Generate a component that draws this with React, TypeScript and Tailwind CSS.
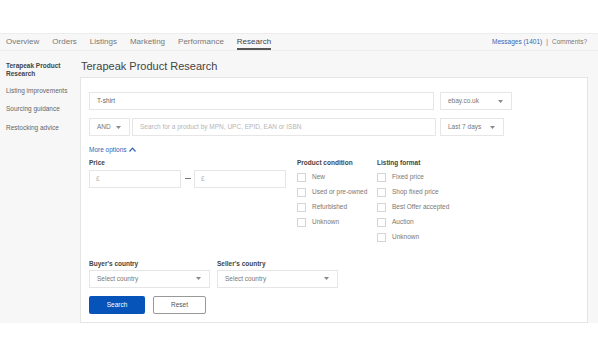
import React from 'react';

const Caret = () => (
  <svg width="5" height="3" viewBox="0 0 5 3" className="fill-[#888]">
    <path d="M0 0h5L2.5 3z" />
  </svg>
);

const Check = ({ label }: { label: string }) => (
  <div className="flex items-center h-[15px]">
    <span className="w-[9px] h-[9px] border border-[#d5d5d5] bg-white mr-[6px]" />
    <span className="text-[6.5px] text-[#777]">{label}</span>
  </div>
);

const Select = ({ text, className }: { text: string; className: string }) => (
  <div className={`h-[18px] border border-[#e6e6e6] bg-white flex items-center justify-between pl-[7px] pr-[8px] ${className}`}>
    <span className="text-[6.5px] text-[#777]">{text}</span>
    <Caret />
  </div>
);

export default function App() {
  const tabs = ['Overview', 'Orders', 'Listings', 'Marketing', 'Performance', 'Research'];
  return (
    <div className="w-[598px] h-[358px] bg-white font-['Liberation_Sans',Arial,sans-serif] flex flex-col">
      <div className="h-[33px]" />
      <div className="h-[18px] bg-[#f7f7f7] border-y border-[#ececec] flex items-center justify-between pl-[6px] pr-[6px]">
        <div className="flex gap-[13px] text-[8px] text-[#777] h-full">
          {tabs.map((t) => (
            <span
              key={t}
              className={`flex items-center h-full ${t === 'Research' ? 'text-[#444] border-b-2 border-[#555] pt-[2px]' : ''}`}
            >
              {t}
            </span>
          ))}
        </div>
        <div className="text-[6.5px] text-[#777] pr-[5px]">
          <span className="text-[#3665b3]">Messages (1401)</span>
          <span className="mx-[4px]">|</span>
          <span>Comments?</span>
        </div>
      </div>
      <div className="h-[272px] bg-[#f7f7f7] flex">
        <div className="w-[80px] pl-[6px] pt-[11px] flex flex-col text-[6.5px] text-[#666]">
          <div className="font-bold text-[#444] leading-[8px]">Terapeak Product Research</div>
          <div className="mt-[8px]">Listing improvements</div>
          <div className="mt-[8px]">Sourcing guidance</div>
          <div className="mt-[9px]">Restocking advice</div>
        </div>
        <div className="flex flex-col">
          <div className="text-[11px] text-[#444] pt-[7px] pl-[1px] h-[26px]">Terapeak Product Research</div>
          <div className="w-[508px] flex-1 bg-white border border-[#e5e5e5] pl-[8px] pt-[14px] flex flex-col">
            <div className="flex gap-[6px]">
              <div className="w-[345px] h-[18px] border border-[#e6e6e6] flex items-center pl-[7px] text-[6.5px] text-[#666]">T-shirt</div>
              <Select text="ebay.co.uk" className="w-[72px]" />
            </div>
            <div className="flex mt-[8px]">
              <Select text="AND" className="w-[41px]" />
              <div className="ml-[2px] w-[304px] h-[18px] border border-[#e6e6e6] flex items-center pl-[7px] text-[6.5px] text-[#b5b5b5]">
                Search for a product by MPN, UPC, EPID, EAN or ISBN
              </div>
              <Select text="Last 7 days" className="w-[64px] ml-[4px]" />
            </div>
            <div className="mt-[9px] text-[6.5px] text-[#3665b3] flex items-center gap-[2px]">
              More options
              <svg width="7" height="5" viewBox="0 0 7 5" className="stroke-[#3665b3]" fill="none" strokeWidth="1.2">
                <path d="M0.5 4.5L3.5 1.2L6.5 4.5" />
              </svg>
            </div>
            <div className="flex mt-[3px]">
              <div className="w-[208px]">
                <div className="text-[6.5px] font-bold text-[#444] h-[12px]">Price</div>
                <div className="flex items-center">
                  <div className="w-[92px] h-[18px] border border-[#e6e6e6] flex items-center pl-[6px] text-[6.5px] text-[#b5b5b5]">£</div>
                  <span className="w-[13px] flex justify-center"><span className="w-[6px] h-px bg-[#777]" /></span>
                  <div className="w-[92px] h-[18px] border border-[#e6e6e6] flex items-center pl-[6px] text-[6.5px] text-[#b5b5b5]">£</div>
                </div>
              </div>
              <div className="w-[80px]">
                <div className="text-[6.5px] font-bold text-[#444] h-[12px]">Product condition</div>
                <div>
                  <Check label="New" />
                  <Check label="Used or pre-owned" />
                  <Check label="Refurbished" />
                  <Check label="Unknown" />
                </div>
              </div>
              <div>
                <div className="text-[6.5px] font-bold text-[#444] h-[12px]">Listing format</div>
                <div>
                  <Check label="Fixed price" />
                  <Check label="Shop fixed price" />
                  <Check label="Best Offer accepted" />
                  <Check label="Auction" />
                  <Check label="Unknown" />
                </div>
              </div>
            </div>
            <div className="flex gap-[7px] mt-[14px]">
              <div>
                <div className="text-[6.5px] font-bold text-[#444] h-[11px]">Buyer's country</div>
                <Select text="Select country" className="w-[121px]" />
              </div>
              <div>
                <div className="text-[6.5px] font-bold text-[#444] h-[11px]">Seller's country</div>
                <Select text="Select country" className="w-[121px]" />
              </div>
            </div>
            <div className="flex gap-[8px] mt-[8px]">
              <div className="w-[56px] h-[18px] bg-[#0654ba] rounded-[2px] flex items-center justify-center text-[6.5px] text-white">Search</div>
              <div className="w-[53px] h-[18px] border border-[#999] rounded-[2px] flex items-center justify-center text-[6.5px] text-[#555]">Reset</div>
            </div>
          </div>
        </div>
      </div>
    </div>
  );
}
